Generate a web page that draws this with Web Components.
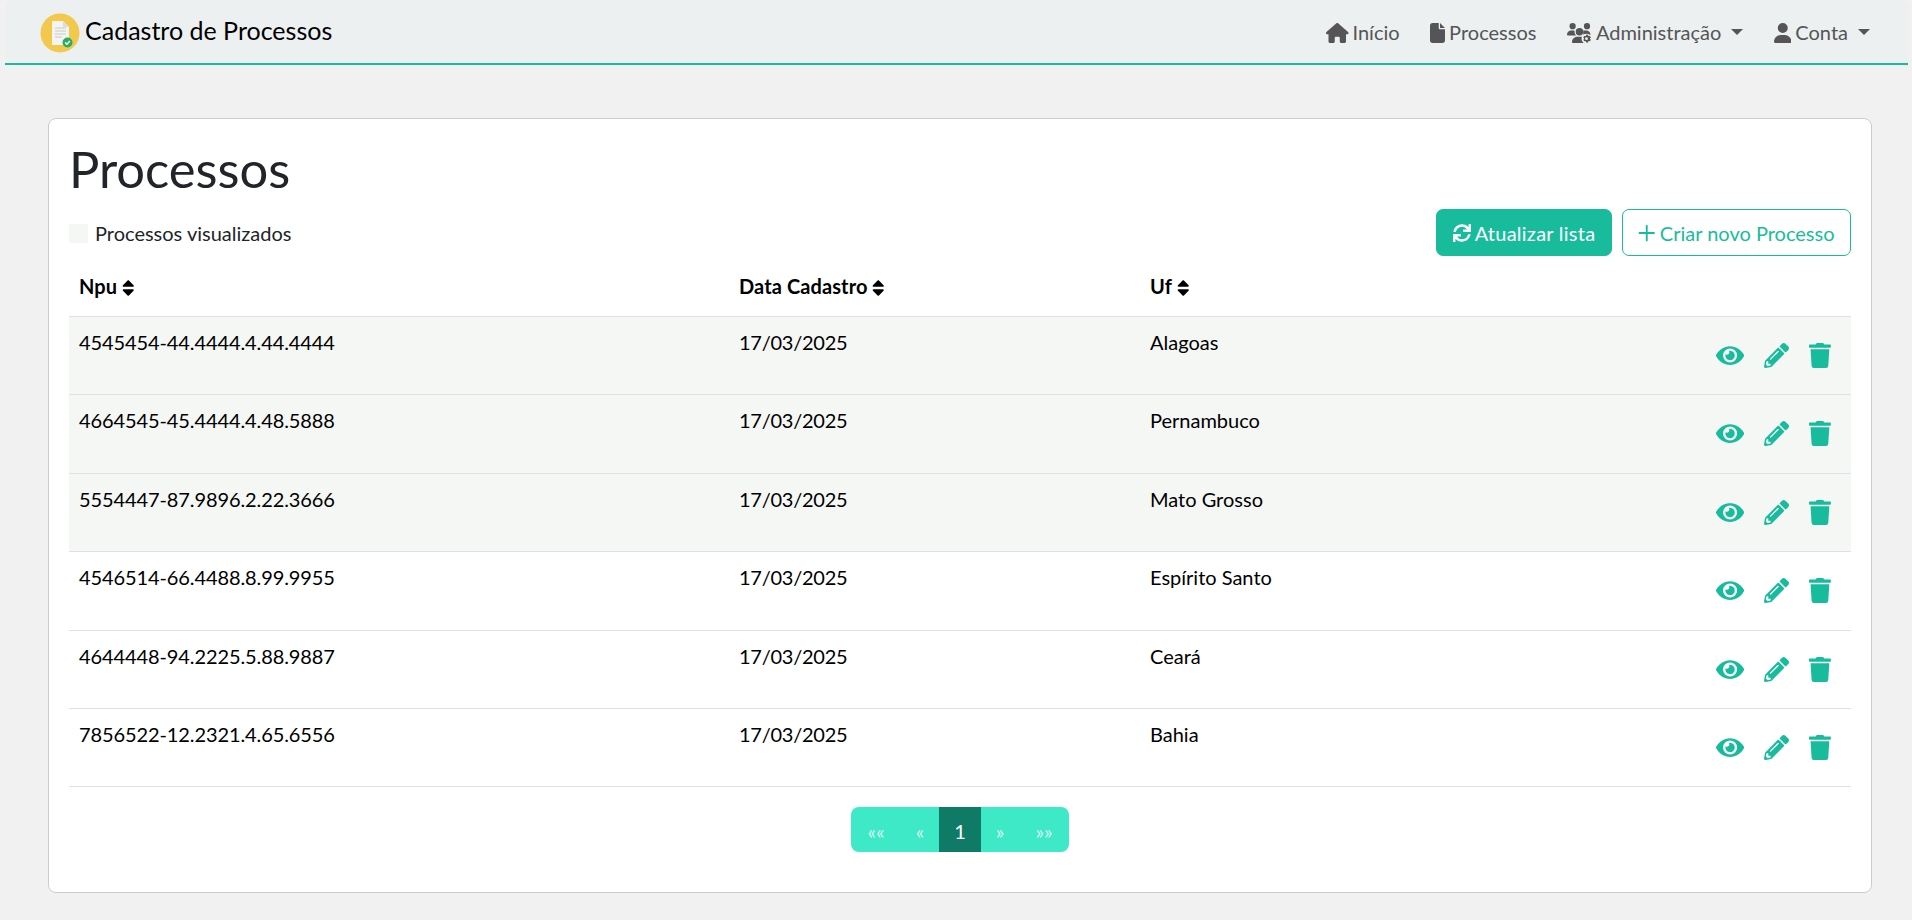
<!DOCTYPE html>
<html lang="pt-BR">
<head>
<meta charset="utf-8">
<title>Cadastro de Processos</title>
<style>
	html, body { margin: 0; height: 100%; }
	body { background: #f1f1f1; font-family: Lato, "Liberation Sans", sans-serif; overflow: hidden; }
</style>
</head>
<body>
<app-shell>
	<app-navbar slot="nav" brand="Cadastro de Processos">
		<nav-link icon="home" label="Início"></nav-link>
		<nav-link icon="file" label="Processos"></nav-link>
		<nav-link icon="usersgear" label="Administração" caret></nav-link>
		<nav-link icon="user" label="Conta" caret></nav-link>
	</app-navbar>
	<page-card>
		<h-title text="Processos"></h-title>
		<list-toolbar></list-toolbar>
		<process-table></process-table>
		<list-pager></list-pager>
	</page-card>
</app-shell>

<script>
const GEAR = "M508 331l14-8c2-1 3-3 2-6-4-12-10-23-19-33-2-2-4-2-6-1l-14 8c-6-5-13-9-20-11v-16c0-3-2-5-4-5-13-3-25-3-38 0-2 0-4 2-4 5v16c-7 2-14 6-20 11l-14-8c-2-1-4-1-6 1-9 10-15 21-19 33-1 3 0 5 2 6l14 8c-1 8-1 15 0 23l-14 8c-2 1-3 3-2 6 4 12 10 23 19 33 2 2 4 2 6 1l14-8c6 5 13 9 20 11v16c0 3 2 5 4 5 13 3 25 3 38 0 2 0 4-2 4-5v-16c7-2 14-6 20-11l14 8c2 1 4 1 6-1 9-10 15-21 19-33 1-3 0-5-2-6l-14-8c1-8 1-15 0-23zm-78 43a32 32 0 1 1 0-64 32 32 0 0 1 0 64z";

const ICONS = {
	home: ["0 0 576 512", "M575.8 255.5c0 18-15 32.1-32 32.1h-32l.7 160.2c0 2.7-.2 5.4-.5 8.1V472c0 22.1-17.9 40-40 40H456c-1.1 0-2.2 0-3.3-.1c-1.4 .1-2.8 .1-4.2 .1H416 392c-22.1 0-40-17.9-40-40V448 384c0-17.7-14.3-32-32-32H256c-17.7 0-32 14.3-32 32v64 24c0 22.1-17.9 40-40 40H160 128.1c-1.5 0-3-.1-4.5-.2c-1.2 .1-2.4 .2-3.6 .2H104c-22.1 0-40-17.9-40-40V360c0-.9 0-1.9 .1-2.8V287.6H32c-18 0-32-14-32-32.1c0-9 3-17 10-24L266.400 8c7-7 15-8 22-8s15 2 21 7L564.800 231.500c8 7 12 15 11 24z"],
	file: ["0 0 384 512", "M0 64C0 28.7 28.7 0 64 0H224V128c0 17.7 14.3 32 32 32H384V448c0 35.3-28.7 64-64 64H64c-35.3 0-64-28.7-64-64V64zm384 64H256V0L384 128z"],
	user: ["0 0 448 512", "M224 256A128 128 0 1 0 224 0a128 128 0 1 0 0 256zm-45.7 48C79.8 304 0 383.800 0 482.300C0 498.700 13.300 512 29.700 512H418.300c16.400 0 29.700-13.300 29.700-29.700C448 383.800 368.200 304 269.700 304H178.300z"],
	usersgear: ["0 0 640 512", "M144 160A80 80 0 1 0 144 0a80 80 0 1 0 0 160zm368 0A80 80 0 1 0 512 0a80 80 0 1 0 0 160zM320 320a96 96 0 1 0 0-192 96 96 0 0 0 0 192zM0 299C0 240 48 192 107 192h43c16 0 31 3 45 10-2 7-3 15-3 22 0 38 17 72 43 96H21C10 320 0 310 0 299zM405 202c14-7 29-10 45-10h43c59 0 107 48 107 107v5H420c3-25-2-70-15-102zM261 352h110c20 0 40 4 58 12v148H155c-15 0-27-12-27-27 0-73 60-133 133-133z",
		`<circle cx="500" cy="400" r="128" fill="#ecf0f1"/><path transform="translate(500 400) scale(1.16) translate(-430 -342)" d="${GEAR}"/>`],
	eye: ["0 0 576 512", "M572.52 241.4C518.29 135.59 410.93 64 288 64S57.68 135.64 3.48 241.41a32.35 32.35 0 0 0 0 29.19C57.71 376.41 165.07 448 288 448s230.32-71.64 284.52-177.41a32.35 32.35 0 0 0 0-29.19zM288 400a144 144 0 1 1 144-144 143.93 143.93 0 0 1-144 144zm0-240a95.31 95.31 0 0 0-25.31 3.79 47.85 47.85 0 0 1-66.9 66.9A95.78 95.78 0 1 0 288 160z"],
	pencil: ["0 0 512 512", "M497.9 142.1l-46.1 46.1c-4.7 4.7-12.3 4.7-17 0l-111-111c-4.7-4.7-4.7-12.3 0-17l46.1-46.1c18.7-18.7 49.1-18.7 67.9 0l60.1 60.1c18.8 18.7 18.8 49.1 0 67.9zM284.2 99.8L21.6 362.4.4 483.9c-2.9 16.4 11.4 30.6 27.8 27.8l121.5-21.3 262.6-262.6c4.7-4.7 4.7-12.3 0-17l-111-111c-4.8-4.7-12.4-4.7-17.1 0zM124.1 339.9c-5.5-5.5-5.5-14.3 0-19.8l154-154c5.5-5.5 14.3-5.5 19.8 0s5.5 14.3 0 19.8l-154 154c-5.5 5.5-14.3 5.5-19.8 0zM88 424h48v36.3l-64.5 11.3-31.1-31.1L51.7 376H88v48z"],
	trash: ["0 0 448 512", "M432 32H312l-9.4-18.7A24 24 0 0 0 281.1 0H166.8a23.72 23.72 0 0 0-21.4 13.3L136 32H16A16 16 0 0 0 0 48v32a16 16 0 0 0 16 16h416a16 16 0 0 0 16-16V48a16 16 0 0 0-16-16zM53.2 467a48 48 0 0 0 47.9 45h245.8a48 48 0 0 0 47.9-45L416 128H32z"],
	sync: ["0 0 512 512", "M440.65 12.57l4 82.77A247.16 247.16 0 0 0 255.83 8C134.73 8 33.91 94.92 12.29 209.82A12 12 0 0 0 24.09 224h49.05a12 12 0 0 0 11.67-9.26 175.91 175.91 0 0 1 317-56.94l-101.46-4.86a12 12 0 0 0-12.57 12v47.41a12 12 0 0 0 12 12H500a12 12 0 0 0 12-12V12a12 12 0 0 0-12-12h-47.37a12 12 0 0 0-11.98 12.57zM255.83 432a175.61 175.61 0 0 1-146-77.8l101.8 4.87a12 12 0 0 0 12.57-12v-47.4a12 12 0 0 0-12-12H12a12 12 0 0 0-12 12V500a12 12 0 0 0 12 12h47.35a12 12 0 0 0 12-12.6l-4.15-82.57A247.17 247.17 0 0 0 255.83 504c121.11 0 221.93-86.92 243.55-201.82a12 12 0 0 0-11.8-14.18h-49.05a12 12 0 0 0-11.67 9.26A175.86 175.86 0 0 1 255.83 432z"],
	plus: ["0 0 448 512", "M416 230H248V62c0-10-8-14-14-14h-20c-6 0-14 4-14 14v168H32c-10 0-14 8-14 14v24c0 6 4 14 14 14h168v168c0 10 8 14 14 14h20c6 0 14-4 14-14V282h168c10 0 14-8 14-14v-24c0-6-4-14-14-14z"],
	sort: ["0 0 320 512", "M41 288h238c21.4 0 32.1 25.9 17 41L177 448c-9.4 9.4-24.6 9.4-33.9 0L24 329c-15.1-15.1-4.4-41 17-41zm255-105L177 64c-9.4-9.4-24.6-9.4-33.9 0L24 183c-15.1 15.1-4.4 41 17 41h238c21.4 0 32.1-25.9 17-41z"],
};

function iconSvg(name, height) {
	const [box, path, extra = ""] = ICONS[name];
	const [, , w, h] = box.split(" ").map(Number);
	const width = (w / h) * height;
	return `<svg xmlns="http://www.w3.org/2000/svg" viewBox="${box}" width="${width}" height="${height}" fill="currentColor" aria-hidden="true"><path d="${path}"/>${extra}</svg>`;
}

class AppShell extends HTMLElement {
	constructor() {
		super();
		this.attachShadow({ mode: "open" });
		this.shadowRoot.innerHTML = `
      <style>
        :host { display: block; padding: 0 4px 0 5px; }
        main { padding: 53px 36px 0 43px; }
      </style>
      <slot name="nav"></slot>
      <main><slot></slot></main>
    `;
	}
}

class AppNavbar extends HTMLElement {
	constructor() {
		super();
		this.attachShadow({ mode: "open" });
	}

	connectedCallback() {
		this.shadowRoot.innerHTML = `
      <style>
        :host { display: flex; align-items: flex-start; justify-content: space-between; height: 63px; background: #ecf0f1; border-bottom: 2px solid #18bc9c; border-radius: 8px 8px 0 0; padding: 0 38px 0 35px; }
        .brand { display: flex; align-items: flex-start; gap: 5px; margin-top: 13px; font-size: 25px; line-height: 30px; color: #000; }
        .brand span { margin-top: 2px; }
        .links { display: flex; gap: 30.500px; padding-top: 21px; }
      </style>
      <div class="brand">
        <svg width="40" height="40" viewBox="0 0 40 40" aria-hidden="true">
          <circle cx="20" cy="20" r="19.5" fill="#f2c94c"/>
          <path d="M12 8h11l6 6v18H12z" fill="#f4f4f2"/>
          <path d="M23 8l6 6h-6z" fill="#dcdcdc"/>
          <path d="M15 15h11M15 18h11M15 21h11M15 24h7" stroke="#d8d8d8" stroke-width="1.4"/>
          <circle cx="27.500" cy="29.500" r="5" fill="#27ae60"/>
          <path d="M25.200 29.500l1.700 1.700 3-3.200" fill="none" stroke="#fff" stroke-width="1.500"/>
        </svg>
        <span>${this.getAttribute("brand")}</span>
      </div>
      <div class="links"><slot></slot></div>
    `;
	}
}

class NavLink extends HTMLElement {
	constructor() {
		super();
		this.attachShadow({ mode: "open" });
	}

	connectedCallback() {
		const caret = this.hasAttribute("caret") ? `<i></i>` : "";
		this.shadowRoot.innerHTML = `
      <style>
        :host { display: flex; align-items: center; gap: 4px; height: 24px; font-size: 20px; color: #555; }
        span { margin-top: -2px; }
        i { width: 0; height: 0; margin-left: 6px; margin-top: -3px; border-top: 6px solid #555; border-left: 6px solid transparent; border-right: 6px solid transparent; }
      </style>
      ${iconSvg(this.getAttribute("icon"), 20)}<span>${this.getAttribute("label")}</span>${caret}
    `;
	}
}

class PageCard extends HTMLElement {
	constructor() {
		super();
		this.attachShadow({ mode: "open" });
		this.shadowRoot.innerHTML = `
      <style>
        :host { display: block; box-sizing: border-box; height: 775px; padding: 20px; background: #fff; border: 1px solid #ccc; border-radius: 8px; }
      </style>
      <slot></slot>
    `;
	}
}

class HTitle extends HTMLElement {
	constructor() {
		super();
		this.attachShadow({ mode: "open" });
	}

	connectedCallback() {
		this.shadowRoot.innerHTML = `
      <style>
        :host { display: block; height: 70px; font-size: 50.700px; line-height: 60px; color: #212529; }
      </style>
      ${this.getAttribute("text")}
    `;
	}
}

class ListToolbar extends HTMLElement {
	constructor() {
		super();
		this.attachShadow({ mode: "open" });
		this.shadowRoot.innerHTML = `
      <style>
        :host { display: flex; align-items: flex-start; justify-content: space-between; height: 47px; }
        .legend { display: flex; align-items: center; gap: 7px; font-size: 20px; color: #212529; height: 24px; margin-top: 12px; }
        .legend b { width: 19px; height: 19px; background: #f5f7f5; }
        .actions { display: flex; gap: 10px; }
        button { display: flex; align-items: center; gap: 4px; box-sizing: border-box; height: 47px; padding: 0 16px; font: 20px Lato, sans-serif; border: 1px solid #18bc9c; border-radius: 7px; }
        .solid { background: #18bc9c; color: #fff; letter-spacing: 0.25px; padding: 0 15.500px 0 16px; }
        .line { background: #fff; color: #18bc9c; padding: 0 15.500px; }
      </style>
      <div class="legend"><b></b><span>Processos visualizados</span></div>
      <div class="actions">
        <button class="solid">${iconSvg("sync", 18)}Atualizar lista</button>
        <button class="line">${iconSvg("plus", 20)}Criar novo Processo</button>
      </div>
    `;
	}
}

const ROWS = [
	["4545454-44.4444.4.44.4444", "17/03/2025", "Alagoas", true],
	["4664545-45.4444.4.48.5888", "17/03/2025", "Pernambuco", true],
	["5554447-87.9896.2.22.3666", "17/03/2025", "Mato Grosso", true],
	["4546514-66.4488.8.99.9955", "17/03/2025", "Espírito Santo", false],
	["4644448-94.2225.5.88.9887", "17/03/2025", "Ceará", false],
	["7856522-12.2321.4.65.6556", "17/03/2025", "Bahia", false],
];

class ProcessTable extends HTMLElement {
	constructor() {
		super();
		this.attachShadow({ mode: "open" });
	}

	connectedCallback() {
		const head = ["Npu", "Data Cadastro", "Uf"]
			.map((label) => `<th>${label} ${iconSvg("sort", 20)}</th>`)
			.join("");
		const body = ROWS.map(
			([npu, date, uf, seen]) => `
        <tr class="${seen ? "seen" : ""}">
          <td class="num">${npu}</td><td class="date">${date}</td><td>${uf}</td>
          <td class="acts"><div>${iconSvg("eye", 25)}${iconSvg("pencil", 25)}${iconSvg("trash", 25)}</div></td>
        </tr>`,
		).join("");
		this.shadowRoot.innerHTML = `
      <style>
        :host { display: block; color: #000; font-size: 20px; }
        table { width: 100%; border-collapse: collapse; table-layout: fixed; }
        th { height: 60px; padding: 0 10px; text-align: left; font-weight: 700; vertical-align: middle; border-bottom: 1px solid #dee2e6; white-space: nowrap; letter-spacing: 0.1px; }
        th svg { vertical-align: -4px; margin-left: 0; }
        td { height: 78.4px; box-sizing: border-box; padding: 13px 10px 0; vertical-align: top; border-bottom: 1px solid #dee2e6; }
        td.num { letter-spacing: -0.1px; }
        td.date { letter-spacing: -0.25px; }
        tr.seen td { background: #f5f7f5; }
        .acts div { display: flex; justify-content: flex-end; gap: 20px; padding: 13px 10px 0 0; color: #18bc9c; }
      </style>
      <table>
        <colgroup><col style="width:660px"><col style="width:411px"><col><col style="width:240px"></colgroup>
        <thead><tr>${head}<th></th></tr></thead>
        <tbody>${body}</tbody>
      </table>
    `;
	}
}

class ListPager extends HTMLElement {
	constructor() {
		super();
		this.attachShadow({ mode: "open" });
		this.shadowRoot.innerHTML = `
      <style>
        :host { display: flex; justify-content: center; margin-top: 20px; }
        ul { display: flex; margin: 0; padding: 0; list-style: none; height: 45px; border-radius: 8px; overflow: hidden; background: #3de9c6; font-size: 20px; color: #d8f8f1; }
        li { display: flex; align-items: center; justify-content: center; width: 38px; padding-top: 3px; box-sizing: border-box; }
        li.wide { width: 50px; }
        li.active { width: 42px; background: #0f7a65; color: #fff; }
      </style>
      <ul>
        <li class="wide">««</li><li>«</li><li class="active">1</li><li>»</li><li class="wide">»»</li>
      </ul>
    `;
	}
}

customElements.define("app-shell", AppShell);
customElements.define("app-navbar", AppNavbar);
customElements.define("nav-link", NavLink);
customElements.define("page-card", PageCard);
customElements.define("h-title", HTitle);
customElements.define("list-toolbar", ListToolbar);
customElements.define("process-table", ProcessTable);
customElements.define("list-pager", ListPager);
</script>
</body>
</html>
